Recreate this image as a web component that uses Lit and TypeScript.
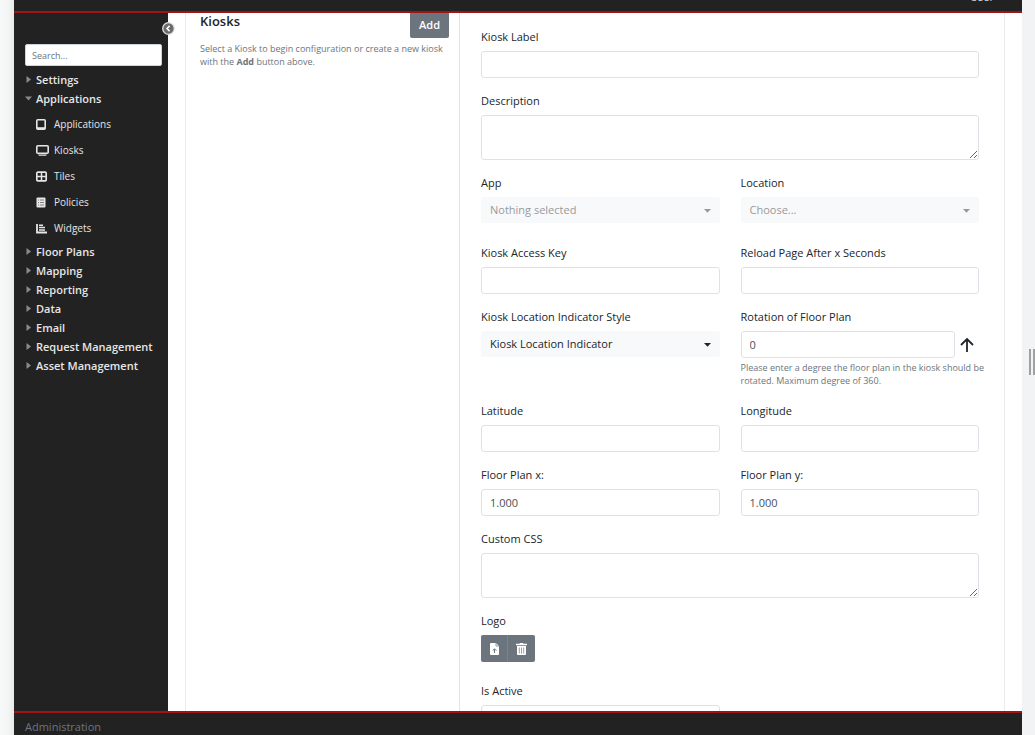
import { LitElement, html, css, svg, nothing } from "lit";
import { customElement } from "lit/decorators.js";

const subIcons: Record<string, unknown> = {
  Applications: svg`<rect x="0.8" y="0.8" width="8.4" height="9.4" rx="1" fill="none" stroke="currentColor" stroke-width="1.6"/><path d="M1 8.2h8v2H1z" fill="currentColor"/>`,
  Kiosks: svg`<rect x="0.8" y="0.8" width="11.4" height="7.4" rx="1" fill="none" stroke="currentColor" stroke-width="1.6"/><path d="M2 9.4h9l-1 1.4H3z" fill="currentColor"/>`,
  Tiles: svg`<rect x="0.8" y="1.2" width="9.4" height="8.6" rx="1" fill="none" stroke="currentColor" stroke-width="1.7"/><path d="M5.5 1v9M1 5.5h9" stroke="currentColor" stroke-width="1.5"/>`,
  Policies: svg`<rect x="0.5" y="0.5" width="9" height="10" rx="1" fill="currentColor"/><path d="M2 3h1M2 5.5h1M2 8h1M4 3h4M4 5.5h4M4 8h4" stroke="#777" stroke-width="0.9"/>`,
  Widgets: svg`<path d="M1 1v8.5h10" fill="none" stroke="currentColor" stroke-width="1.8"/><path d="M3 2.2h4M3 4.6h6M3 7h6" stroke="currentColor" stroke-width="1.5"/>`,
};

const menu: { label: string; items?: string[] }[] = [
  { label: "Settings" },
  { label: "Applications", items: ["Applications", "Kiosks", "Tiles", "Policies", "Widgets"] },
  { label: "Floor Plans" },
  { label: "Mapping" },
  { label: "Reporting" },
  { label: "Data" },
  { label: "Email" },
  { label: "Request Management" },
  { label: "Asset Management" },
];

@customElement("app-root")
export class AppRoot extends LitElement {
  static styles = css`
    :host {
      display: flex;
      height: 100vh;
      overflow: hidden;
      background: #f1f3f5;
      color: #212529;
      font: 11px/16px "Open Sans", "Noto Sans", sans-serif;
    }
    * { box-sizing: border-box; }
    button, input, select, textarea { font: inherit; color: inherit; margin: 0; }
    .edge { flex: none; width: 14px; background: linear-gradient(90deg, #f7f9f8, #f3f5f4 60%, #e8eaea); }
    .window { flex: 1; min-width: 0; display: flex; flex-direction: column; background: #fff; }
    .rail { flex: none; width: 13px; display: flex; align-items: center; justify-content: flex-end; }
    .grip { width: 6px; height: 26px; margin-top: -12px; border: solid #a0a0a0; border-width: 0 2px; }
    .top {
      flex: none; height: 13px; overflow: hidden; display: flex; align-items: flex-end; justify-content: flex-end;
      padding: 0 28px 6px; background: #222; color: #ddd; border-bottom: 2px solid #a01418;
    }
    .bottom {
      flex: none; height: 24px; padding: 6px 11px 0; overflow: hidden;
      background: #222; color: #6c757d; border-top: 2px solid #a01418;
    }
    .main { flex: 1; min-height: 0; display: flex; }
    .sidebar { position: relative; flex: none; width: 154px; padding: 31px 6px 0 11px; background: #222; color: #e6e6e6; }
    .collapse {
      position: absolute; top: 9px; right: -7px; width: 13px; height: 13px; padding: 0;
      border: 0; border-radius: 50%; background: none; display: block;
    }
    .collapse svg { display: block; }
    .search {
      display: block; width: 100%; height: 22px; padding: 0 6px; border: 1px solid #ced4da; border-radius: 2px;
      background: #fff; color: #444; font-size: 9px;
    }
    .search::placeholder { color: #6c757d; opacity: 1; }
    .menu, .sub { list-style: none; margin: 0; padding: 0; }
    .menu { padding-top: 4px; }
    .entry { display: flex; align-items: center; gap: 4px; height: 19px; color: inherit; text-decoration: none; font-weight: 600; }
    .arrow { width: 7px; height: 7px; color: #8a8a8a; flex: none; }
    .sub { padding: 3px 0 1px; }
    .leaf { display: grid; grid-template-columns: 14px 1fr; gap: 4px; align-items: center; height: 26px; padding-left: 11px; color: inherit; text-decoration: none; font-size: 10px; }
    .panel { flex: 1; min-width: 0; margin: 0 17px; border: solid #e9ebed; border-width: 0 1px; display: grid; grid-template-columns: 274px 1fr; overflow: hidden; }
    .list { border-right: 1px solid #e2e5e8; padding: 0 10px 0 14px; }
    .head { display: flex; justify-content: space-between; align-items: flex-start; }
    .title { margin: 0; font-size: 13px; line-height: 16px; font-weight: 600; }
    .add { height: 25px; padding: 0 9px 1px; border: 0; border-radius: 0 0 2px 2px; background: #6c757d; color: #fff; font-weight: 600; }
    .hint { margin: 0; font-size: 9px; line-height: 13px; color: #6c757d; }
    .intro { padding-top: 4px; }
    .form { display: grid; grid-template-columns: 1fr 1fr; column-gap: 21px; row-gap: 15px; align-content: start; padding: 16px 25px 0 21px; overflow: hidden; }
    .field { min-width: 0; display: flex; flex-direction: column; gap: 6px; }
    .wide { grid-column: 1 / -1; }
    .loose { padding-bottom: 6px; }
    .box { width: 100%; height: 27px; padding: 0 8px; border: 1px solid #dee2e6; border-radius: 3px; background: #fff; color: #495057; font-size: 11px; }
    .area { display: block; height: 45px; resize: vertical; }
    .pick { display: grid; align-items: center; }
    .pick > * { grid-area: 1 / 1; }
    .select { appearance: none; width: 100%; height: 27px; padding: 0 9px; border: 1px solid #fff; border-width: 0 0 1px; border-radius: 2px; background: #f8f9fa; color: #212529; opacity: 1; }
    .caret { justify-self: end; margin-right: 9px; pointer-events: none; }
    .muted, .muted .select { color: #999; }
    .turn { display: grid; grid-template-columns: 1fr 16px; gap: 4px; align-items: center; padding-right: 4px; }
    .note { margin: -3px -16px 1px 0; }
    .group { display: flex; }
    .tool { width: 27px; height: 27px; padding: 0; border: 0; background: #6c757d; color: #fff; display: grid; place-items: center; }
    .tool:first-child { border-radius: 2px 0 0 2px; border-right: 1px solid #7a838a; }
    .tool:last-child { border-radius: 0 2px 2px 0; }
  `;

  private text(id: string, label: string, value = "", wide = false) {
    return html`<div class="field ${wide ? "wide" : ""}">
      <label for=${id}>${label}</label>
      <input class="box" id=${id} type="text" .value=${value} />
    </div>`;
  }

  private area(id: string, label: string) {
    return html`<div class="field wide">
      <label for=${id}>${label}</label>
      <textarea class="box area" id=${id}></textarea>
    </div>`;
  }

  private select(id: string, label: string, value: string, muted = false) {
    return html`<div class="field ${muted ? "loose" : ""}">
      <label for=${id}>${label}</label>
      <div class="pick ${muted ? "muted" : ""}">
        <select class="select" id=${id} ?disabled=${muted}><option>${value}</option></select>
        <svg class="caret" width="7" height="4" viewBox="0 0 7 4" aria-hidden="true"><path d="M0 0h7L3.5 3.8z" fill="currentColor"/></svg>
      </div>
    </div>`;
  }

  render() {
    return html`
      <div class="edge"></div>
      <div class="window">
        <header class="top"><span>User</span></header>
        <div class="main">
          <nav class="sidebar">
            <button class="collapse" aria-label="Collapse menu">
              <svg width="13" height="13" viewBox="0 0 13 13"><circle cx="6.5" cy="6.5" r="5.8" fill="#6b6b6b" stroke="#e4e4e4" stroke-width="1.3"/><path d="M7.6 3.9 5 6.5l2.6 2.6" fill="none" stroke="#fff" stroke-width="1.5"/></svg>
            </button>
            <input class="search" type="search" placeholder="Search..." aria-label="Search" />
            <ul class="menu">
              ${menu.map((m) => html`<li>
                <a class="entry" href="#">
                  <svg class="arrow" viewBox="0 0 7 7" aria-hidden="true"><path d=${m.items ? "M0 1.5h7L3.5 5.5z" : "M1.5 0l4.5 3.5-4.5 3.5z"} fill="currentColor"/></svg>${m.label}
                </a>
                ${m.items ? html`<ul class="sub">${m.items.map((s) => html`<li><a class="leaf" href="#">
                  <svg width="13" height="11" viewBox="0 0 13 11" aria-hidden="true">${subIcons[s]}</svg>${s}</a></li>`)}</ul>` : nothing}
              </li>`)}
            </ul>
          </nav>
          <main class="panel">
            <section class="list">
              <div class="head"><h1 class="title">Kiosks</h1><button class="add">Add</button></div>
              <p class="hint intro">Select a Kiosk to begin configuration or create a new kiosk with the <strong>Add</strong> button above.</p>
            </section>
            <form class="form">
              ${this.text("label", "Kiosk Label", "", true)}
              ${this.area("description", "Description")}
              ${this.select("app", "App", "Nothing selected", true)}
              ${this.select("location", "Location", "Choose...", true)}
              ${this.text("key", "Kiosk Access Key")}
              ${this.text("reload", "Reload Page After x Seconds")}
              ${this.select("style", "Kiosk Location Indicator Style", "Kiosk Location Indicator")}
              <div class="field">
                <label for="rotation">Rotation of Floor Plan</label>
                <div class="turn">
                  <input class="box" id="rotation" type="text" .value=${"0"} aria-describedby="rotation-note" />
                  <svg width="16" height="16" viewBox="0 0 16 16" aria-hidden="true"><path d="M8 15V2M2 8l6-6 6 6" fill="none" stroke="#212529" stroke-width="1.8"/></svg>
                </div>
                <p class="hint note" id="rotation-note">Please enter a degree the floor plan in the kiosk should be rotated. Maximum degree of 360.</p>
              </div>
              ${this.text("lat", "Latitude")}
              ${this.text("lng", "Longitude")}
              ${this.text("fx", "Floor Plan x:", "1.000")}
              ${this.text("fy", "Floor Plan y:", "1.000")}
              ${this.area("css", "Custom CSS")}
              <div class="field wide loose">
                <span id="logo">Logo</span>
                <div class="group" role="group" aria-labelledby="logo">
                  <button class="tool" type="button" aria-label="Upload logo"><svg width="11" height="12" viewBox="0 0 11 12"><path d="M1 1q0-1 1-1h5l3 3v8q0 1-1 1H2q-1 0-1-1z" fill="#fff"/><path d="M7 0v3h3" fill="none" stroke="#6c757d" stroke-width=".7"/><path d="M5.5 10V6.2M3.6 7.7l1.9-1.9 1.9 1.9" fill="none" stroke="#6c757d"/></svg></button>
                  <button class="tool" type="button" aria-label="Delete logo"><svg width="11" height="12" viewBox="0 0 11 12"><path d="M0 .8h3.5L4 0h3l.5.8H11v1.4H0zM1 3h9v8q0 1-1 1H2q-1 0-1-1z" fill="#fff"/><path d="M3.3 4.5v6M5.5 4.5v6M7.7 4.5v6" stroke="#6c757d" stroke-width=".7"/></svg></button>
                </div>
              </div>
              ${this.text("active", "Is Active")}
            </form>
          </main>
        </div>
        <footer class="bottom">Administration</footer>
      </div>
      <div class="rail"><div class="grip"></div></div>
    `;
  }
}
